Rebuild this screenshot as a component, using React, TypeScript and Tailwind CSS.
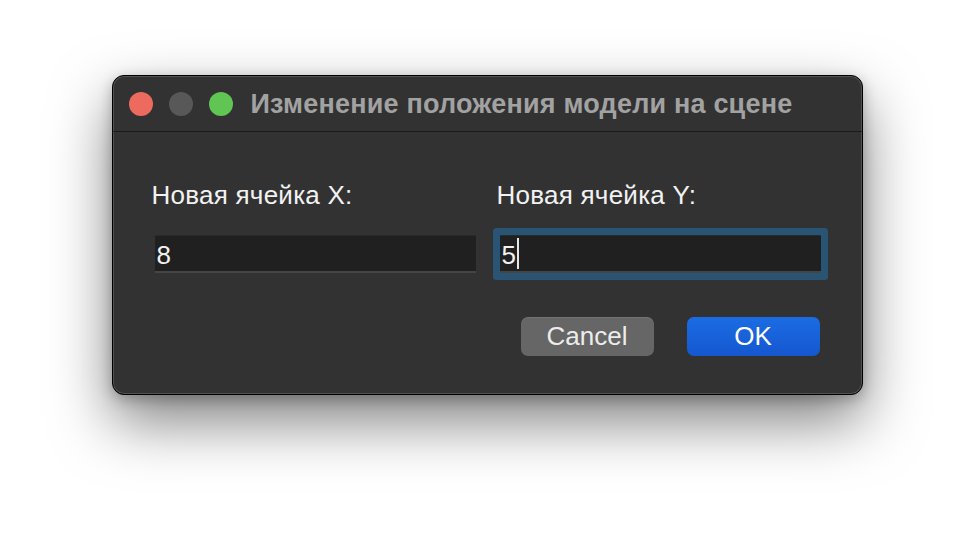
import React from 'react';

const font = { fontFamily: '"Liberation Sans", Arial, sans-serif' };

function TrafficLights() {
  return (
    <div className="flex items-center gap-[16px]">
      <span className="w-[24px] h-[24px] rounded-full bg-[#ed6a5e]" />
      <span className="w-[24px] h-[24px] rounded-full bg-[#585858]" />
      <span className="w-[24px] h-[24px] rounded-full bg-[#61c554]" />
    </div>
  );
}

function Field({ label, value, focused }: { label: string; value: string; focused?: boolean }) {
  return (
    <div className="flex flex-col">
      <label className="-ml-[3px] h-[30px] leading-[30px] text-[26px] tracking-[0.25px] text-[#f2f2f2]">{label}</label>
      <div
        className={
          (focused ? 'rounded-[1px] shadow-[0_0_0_7px_#2a5473] ' : '') +
          'mt-[25px] h-[38px] bg-[#202020] border-t border-t-[#2a2a2a] border-b-2 border-b-[#454545] flex items-center pl-[2px] text-[26px] text-[#f2f2f2]'
        }
      >
        <span className="leading-[30px] mt-[2px]">{value}</span>
        {focused && <span className="ml-[1px] w-[2px] h-[31px] bg-[#e6e6e6]" />}
      </div>
    </div>
  );
}

export default function App() {
  return (
    <main className="min-h-[542px] w-full bg-white flex justify-center pt-[75px]" style={font}>
      <div className="w-[751px] h-[320px] rounded-[12px] border border-black bg-[#323232] shadow-[inset_0_0_0_1px_rgba(255,255,255,0.16),0_26px_60px_rgba(0,0,0,0.5),0_4px_14px_rgba(0,0,0,0.25)] flex flex-col overflow-hidden">
        <div className="h-[56px] flex items-center pl-[16px] border-b border-b-[#1b1b1b] shrink-0">
          <TrafficLights />
          <h1 className="ml-[18px] leading-[30px] text-[27px] tracking-[0.2px] font-bold text-[#a2a2a2]">
            Изменение положения модели на сцене
          </h1>
        </div>

        <div className="flex flex-col pt-[48px] pl-[42px] pr-[41px]">
          <div className="grid grid-cols-[321px_321px] gap-x-[24px]">
            <Field label="Новая ячейка X:" value="8" />
            <Field label="Новая ячейка Y:" value="5" focused />
          </div>

          <div className="flex justify-end gap-[33px] mt-[44px] mr-[1px]">
            <button className="w-[133px] h-[39px] rounded-[7px] bg-[#666666] text-[26px] text-[#ececec] shadow-[inset_0_1px_0_rgba(255,255,255,0.08)]">
              Cancel
            </button>
            <button className="w-[133px] h-[39px] rounded-[7px] bg-gradient-to-b from-[#1b6ce4] to-[#1557cf] text-[26px] text-white">
              OK
            </button>
          </div>
        </div>
      </div>
    </main>
  );
}
